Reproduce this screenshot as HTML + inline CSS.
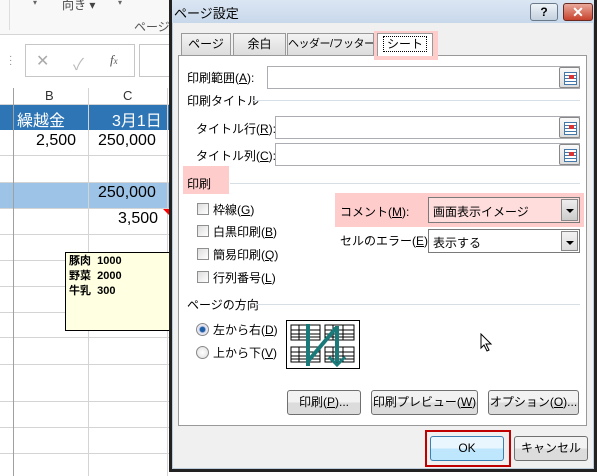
<!DOCTYPE html>
<html><head><meta charset="utf-8"><style>
*{margin:0;padding:0;box-sizing:border-box}
body{width:600px;height:476px;overflow:hidden;background:#fff;position:relative;font-family:"Liberation Sans","Noto Sans CJK JP",sans-serif;font-size:12px;color:#000}
.a{position:absolute;white-space:nowrap}
.hl{position:absolute;background:#fcc}
.inp{position:absolute;background:#fff;border:1px solid #abadb3}
.rb{position:absolute;width:21px;height:21px;border:1px solid #888;border-radius:2px;background:linear-gradient(#fafafa,#ddd)}
.rb:after{content:"";position:absolute;left:4px;top:4px;width:11px;height:11px;background:repeating-linear-gradient(#fff 0 2px,#47a 2px 3px);border:1px solid #47a}
.rb:before{content:"";position:absolute;left:9px;top:7px;width:5px;height:4px;background:#d33;z-index:1}
.cb{position:absolute;width:12px;height:12px;border:1px solid #8e8f8f;background:linear-gradient(135deg,#ddd,#fff)}
.btn{position:absolute;border:1px solid #707070;border-radius:3px;background:linear-gradient(#f2f2f2 50%,#dcdcdc 50%);text-align:center;font-size:12px;white-space:nowrap}
.tab{position:absolute;top:33px;height:22px;border:1px solid #999;border-bottom:none;background:linear-gradient(#f3f3f3,#dcdcdc);text-align:center;line-height:20px;font-size:12px;white-space:nowrap;overflow:hidden}
.sel{position:absolute;background:#fff;border:1px solid #7a7a7a}
.arr{position:absolute;right:1px;top:1px;bottom:1px;width:17px;border:1px solid #888;background:linear-gradient(#f2f2f2,#ddd)}
.arr:after{content:"";position:absolute;left:4px;top:9px;border:4px solid transparent;border-top:4px solid #000}
.rad{position:absolute;width:13px;height:13px;border-radius:50%;border:1px solid #888;background:radial-gradient(#fff,#ddd)}
u{text-decoration:underline}
.grl{position:absolute;background:#d4d4d4}
</style></head><body>
<!-- spreadsheet -->
<div class="a" style="left:0;top:0;width:170px;height:35px;background:#f8f8f8;border-bottom:1px solid #d5d5d5"></div>
<div class="a" style="left:62px;top:-4px;font-size:12px;color:#444">向き ▾</div>
<div class="a" style="left:33px;top:-2px;color:#666;font-size:8px">▾</div>
<div class="a" style="left:118px;top:-2px;color:#666;font-size:8px">▾</div>
<div class="a" style="left:134px;top:18px;color:#555;font-size:12px">ページ設</div>
<div class="a" style="left:9px;top:0;width:1px;height:30px;background:#ddd"></div>
<div class="a" style="left:25px;top:44px;width:110px;height:33px;border:1px solid #c6c6c6;background:#fff"></div>
<div class="a" style="left:36px;top:51px;color:#aaa;font-size:16px">✕</div>
<div class="a" style="left:73px;top:51px;color:#bbb;font-size:16px">✓</div>
<div class="a" style="left:110px;top:52px;color:#555;font-style:italic;font-family:'Liberation Serif',serif;font-size:13px">f<span style="font-size:9px">x</span></div>
<div class="a" style="left:139px;top:44px;width:40px;height:33px;border:1px solid #c6c6c6;background:#fff"></div>
<div class="a" style="left:9px;top:55px;color:#888;font-size:10px;line-height:4px">·<br>·<br>·</div>
<div class="a" style="left:0;top:88px;width:170px;height:17px;background:#fff;border-bottom:1px solid #d4d4d4"></div>
<div class="a" style="left:45px;top:88px;font-size:13px;color:#333">B</div>
<div class="a" style="left:123px;top:88px;font-size:13px;color:#333">C</div>
<div class="a" style="left:0;top:105px;width:170px;height:25px;background:#2e75b6"></div>
<div class="a" style="left:17px;top:107px;color:#fff;font-size:16px">繰越金</div>
<div class="a" style="left:112px;top:107px;color:#fff;font-size:16px">3月1日</div>
<div class="a" style="left:0;top:182px;width:170px;height:27px;background:#9dc3e6"></div>
<div class="grl" style="left:0;top:155px;width:170px;height:1px"></div>
<div class="grl" style="left:0;top:182px;width:170px;height:1px"></div>
<div class="grl" style="left:0;top:208px;width:170px;height:1px"></div>
<div class="grl" style="left:0;top:234px;width:170px;height:1px"></div>
<div class="grl" style="left:0;top:260px;width:170px;height:1px"></div>
<div class="grl" style="left:0;top:286px;width:170px;height:1px"></div>
<div class="grl" style="left:0;top:312px;width:170px;height:1px"></div>
<div class="grl" style="left:0;top:337px;width:170px;height:1px"></div>
<div class="grl" style="left:0;top:364px;width:170px;height:1px"></div>
<div class="grl" style="left:0;top:401px;width:170px;height:1px"></div>
<div class="grl" style="left:0;top:427px;width:170px;height:1px"></div>
<div class="grl" style="left:0;top:453px;width:170px;height:1px"></div>
<div class="a" style="left:13px;top:88px;width:1px;height:388px;background:#a0a0a0"></div>
<div class="grl" style="left:88px;top:88px;width:1px;height:388px"></div>
<div class="grl" style="left:167px;top:88px;width:1px;height:388px"></div>
<div class="a" style="left:36px;top:132px;font-size:16px">2,500</div>
<div class="a" style="left:98px;top:132px;font-size:16px">250,000</div>
<div class="a" style="left:98px;top:184px;font-size:16px">250,000</div>
<div class="a" style="left:118px;top:210px;font-size:16px">3,500</div>
<div class="a" style="left:163px;top:209px;border:3px solid transparent;border-top:3px solid red;border-right:3px solid red"></div>
<div class="a" style="left:65px;top:252px;width:106px;height:79px;background:#ffffe1;border:1px solid #000;font-size:11px;font-weight:bold;line-height:15px;padding:1px 3px">豚肉&nbsp; 1000<br>野菜&nbsp; 2000<br>牛乳&nbsp; 300</div>
<!-- dialog -->
<div class="a" style="left:169px;top:0;width:428px;height:472px;background:#f0f0f0;border:3px solid #222;border-top:none;box-shadow:inset 0 0 0 1px #bcd"></div>
<div class="a" style="left:172px;top:0;width:422px;height:23px;background:linear-gradient(#dbe6f3,#c8d8eb)"></div>
<div class="a" style="left:174px;top:3px;font-size:13px">ページ設定</div>
<div class="a" style="left:530px;top:3px;width:28px;height:18px;border:1px solid #6a7a8a;border-radius:3px;background:linear-gradient(#eef3f8,#c3d0de);text-align:center;font-weight:bold;font-size:12px;line-height:16px">?</div>
<div class="a" style="left:563px;top:3px;width:30px;height:18px;border:1px solid #6a2a20;border-radius:3px;background:linear-gradient(#e9a99b,#c7422d);text-align:center;color:#fff;font-weight:bold;font-size:14px;line-height:16px">✕</div>
<div class="a" style="left:178px;top:55px;width:409px;height:371px;background:#fff;border:1px solid #999"></div>
<div class="tab" style="left:181px;width:50px">ページ</div>
<div class="tab" style="left:233px;width:53px">余白</div>
<div class="tab" style="left:287px;width:87px;font-size:11px;letter-spacing:-0.5px">ヘッダー/フッター</div>
<div class="hl" style="left:374px;top:31px;width:64px;height:29px"></div>
<div class="a" style="left:377px;top:33px;width:56px;height:23px;background:#fff;border:1px solid #999;border-bottom:none;text-align:center;line-height:20px"><span style="outline:1px dotted #000;padding:0 3px">シート</span></div>
<div class="a" style="left:187px;top:69px">印刷範囲(<u>A</u>):</div>
<div class="inp" style="left:267px;top:66px;width:313px;height:23px"></div>
<div class="rb" style="left:559px;top:67px"></div>
<div class="a" style="left:187px;top:92px">印刷タイトル</div>
<div class="a" style="left:252px;top:100px;width:328px;height:1px;background:#d5dfe5"></div>
<div class="a" style="left:196px;top:120px">タイトル行(<u>R</u>):</div>
<div class="inp" style="left:275px;top:116px;width:305px;height:23px"></div>
<div class="rb" style="left:559px;top:117px"></div>
<div class="a" style="left:196px;top:147px">タイトル列(<u>C</u>):</div>
<div class="inp" style="left:275px;top:143px;width:305px;height:23px"></div>
<div class="rb" style="left:559px;top:144px"></div>
<div class="hl" style="left:183px;top:166px;width:46px;height:28px"></div>
<div class="a" style="left:187px;top:175px">印刷</div>
<div class="a" style="left:230px;top:183px;width:350px;height:1px;background:#d5dfe5"></div>
<div class="cb" style="left:197px;top:203px"></div><div class="a" style="left:213px;top:201px">枠線(<u>G</u>)</div>
<div class="cb" style="left:197px;top:225px"></div><div class="a" style="left:213px;top:223px">白黒印刷(<u>B</u>)</div>
<div class="cb" style="left:197px;top:248px"></div><div class="a" style="left:213px;top:246px">簡易印刷(<u>Q</u>)</div>
<div class="cb" style="left:197px;top:271px"></div><div class="a" style="left:213px;top:269px">行列番号(<u>L</u>)</div>
<div class="hl" style="left:335px;top:193px;width:249px;height:34px"></div>
<div class="a" style="left:340px;top:203px">コメント(<u>M</u>):</div>
<div class="sel" style="left:428px;top:197px;width:152px;height:26px;background:#fdd"><span style="position:absolute;left:4px;top:5px">画面表示イメージ</span><div class="arr" style="background:linear-gradient(#eee,#ccc)"></div></div>
<div class="a" style="left:340px;top:232px">セルのエラー(<u>E</u>):</div>
<div class="sel" style="left:428px;top:229px;width:152px;height:24px"><span style="position:absolute;left:4px;top:4px">表示する</span><div class="arr"></div></div>
<div class="a" style="left:187px;top:296px">ページの方向</div>
<div class="a" style="left:256px;top:304px;width:324px;height:1px;background:#d5dfe5"></div>
<div class="rad" style="left:196px;top:323px;background:radial-gradient(#1e5fa8 30%,#dde 45%,#fff)"></div><div class="a" style="left:213px;top:321px">左から右(<u>D</u>)</div>
<div class="rad" style="left:196px;top:346px"></div><div class="a" style="left:213px;top:344px">上から下(<u>V</u>)</div>
<svg class="a" style="left:286px;top:320px" width="74" height="49" viewBox="0 0 74 49">
<rect x="0.5" y="0.5" width="73" height="48" fill="#fff" stroke="#000"/>
<g fill="none" stroke="#000" stroke-width="1">
<rect x="5" y="5" width="29" height="15"/><rect x="39" y="5" width="29" height="15"/>
<rect x="5" y="27" width="29" height="15"/><rect x="39" y="27" width="29" height="15"/>
<path d="M5 10h29M5 14h29M5 17h29M39 10h29M39 14h29M39 17h29M5 32h29M5 36h29M5 39h29M39 32h29M39 36h29M39 39h29M13 5v15M23 5v15M47 5v15M57 5v15M13 27v15M23 27v15M47 27v15M57 27v15"/>
</g>
<path d="M22 4v42M23 40L50 8M51 6v36" stroke="#1a7a7a" stroke-width="4" fill="none"/>
<path d="M43 37l8 8 8-8" stroke="#1a7a7a" stroke-width="3" fill="none"/>
</svg>
<svg class="a" style="left:480px;top:333px" width="13" height="20"><path d="M1 1v14l3-3 3 6 2-1-3-6h5z" fill="#fff" stroke="#000"/></svg>
<div class="btn" style="left:287px;top:390px;width:74px;height:25px;line-height:23px">印刷(<u>P</u>)...</div>
<div class="btn" style="left:371px;top:390px;width:107px;height:25px;line-height:23px">印刷プレビュー(<u>W</u>)</div>
<div class="btn" style="left:488px;top:390px;width:91px;height:25px;line-height:23px">オプション(<u>O</u>)...</div>
<div class="a" style="left:425px;top:430px;width:86px;height:37px;border:2px solid #c00000"></div>
<div class="btn" style="left:430px;top:436px;width:74px;height:25px;line-height:23px;border-color:#3c7fb1;background:linear-gradient(#eaf6fd 50%,#bee6fd 50%)">OK</div>
<div class="btn" style="left:514px;top:436px;width:74px;height:25px;line-height:23px">キャンセル</div>
</body></html>
